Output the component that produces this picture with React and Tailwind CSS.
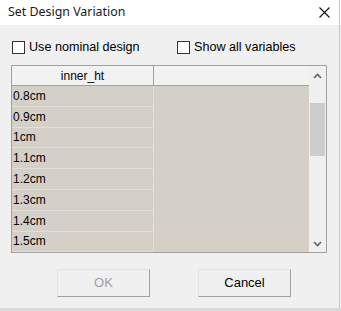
import React from "react";

const values = ["0.8cm", "0.9cm", "1cm", "1.1cm", "1.2cm", "1.3cm", "1.4cm", "1.5cm"];

const Checkbox = ({ label }) => (
  <label className="flex items-center gap-[4px]">
    <span className="w-[13px] h-[13px] border border-[#333333] bg-white"></span>
    <span className="text-[12.6px] leading-[13px] text-black">{label}</span>
  </label>
);

const Chevron = ({ up }) => (
  <svg width="9" height="6" viewBox="0 0 9 6">
    <path
      d={up ? "M1 5 L4.5 1.5 L8 5" : "M1 1 L4.5 4.5 L8 1"}
      fill="none"
      stroke="#606060"
      strokeWidth="1.6"
    />
  </svg>
);

const App = () => {
  return (
    <div
      className="w-[341px] h-[311px] bg-[#f0f0f0] relative overflow-hidden flex flex-col"
      style={{ fontFamily: '"Liberation Sans", Arial, sans-serif' }}
    >
      {/* Title bar */}
      <div className="h-[25px] bg-white flex items-center justify-between pl-[8px] pr-[11px]">
        <span className="text-[12.4px] text-[#1a1a1a]" style={{ fontFamily: '"Noto Sans", sans-serif' }}>
          Set Design Variation
        </span>
        <svg width="11" height="11" viewBox="0 0 11 11">
          <path d="M0.5 0.5 L10.5 10.5 M10.5 0.5 L0.5 10.5" stroke="#111" strokeWidth="1.1" />
        </svg>
      </div>

      {/* Options */}
      <div className="flex items-center pl-[12px] mt-[16px] h-[13px]">
        <div className="w-[165px]">
          <Checkbox label="Use nominal design" />
        </div>
        <Checkbox label="Show all variables" />
      </div>

      {/* Table */}
      <div className="ml-[11px] mt-[11px] w-[316px] h-[188px] border border-[#a0a0a0] flex overflow-hidden">
        <div className="w-[297px] flex flex-col">
          <div className="h-[20px] flex bg-[#f2f2f2] border-b border-[#a0a0a0] shrink-0">
            <div className="w-[142px] border-r border-[#a0a0a0] text-[12px] text-black flex items-center justify-center">
              inner_ht
            </div>
            <div className="flex-1"></div>
          </div>
          <div className="flex-1 flex bg-[#d4d0c8]">
            <div className="w-[142px] border-r border-[#e2dfd9] flex flex-col">
              {values.map((v) => (
                <div
                  key={v}
                  className="h-[20.8px] shrink-0 border-b border-[#e2dfd9] pl-[1px] flex items-center text-[12px] text-black"
                >
                  {v}
                </div>
              ))}
            </div>
            <div className="flex-1"></div>
          </div>
        </div>
        {/* Scrollbar */}
        <div className="w-[17px] bg-[#f0f0f0] flex flex-col items-center">
          <div className="h-[20px] flex items-center justify-center shrink-0">
            <Chevron up />
          </div>
          <div className="w-[15px] h-[53px] bg-[#cdcdcd] mt-[17px]"></div>
          <div className="flex-1"></div>
          <div className="h-[17px] flex items-center justify-center shrink-0">
            <Chevron />
          </div>
        </div>
      </div>

      {/* Buttons */}
      <div className="flex mt-[16px] pl-[57px] gap-[48px]">
        <button className="w-[93px] h-[28px] bg-[#f0f0f0] border border-t-[#e3e3e3] border-l-[#e3e3e3] border-r-[#a0a0a0] border-b-[#a0a0a0] text-[13px] text-[#a0a0a0]">
          OK
        </button>
        <button className="w-[93px] h-[28px] bg-[#f0f0f0] border border-t-[#e3e3e3] border-l-[#e3e3e3] border-r-[#a0a0a0] border-b-[#a0a0a0] text-[13px] text-black">
          Cancel
        </button>
      </div>

      {/* Window frame edges */}
      <div className="absolute right-[1px] top-0 w-[1px] h-[308px] bg-[#c8c8c8]"></div>
      <div className="absolute left-0 bottom-0 w-full h-[3px] bg-[#d9d9d9]"></div>
    </div>
  );
};

export default App;
